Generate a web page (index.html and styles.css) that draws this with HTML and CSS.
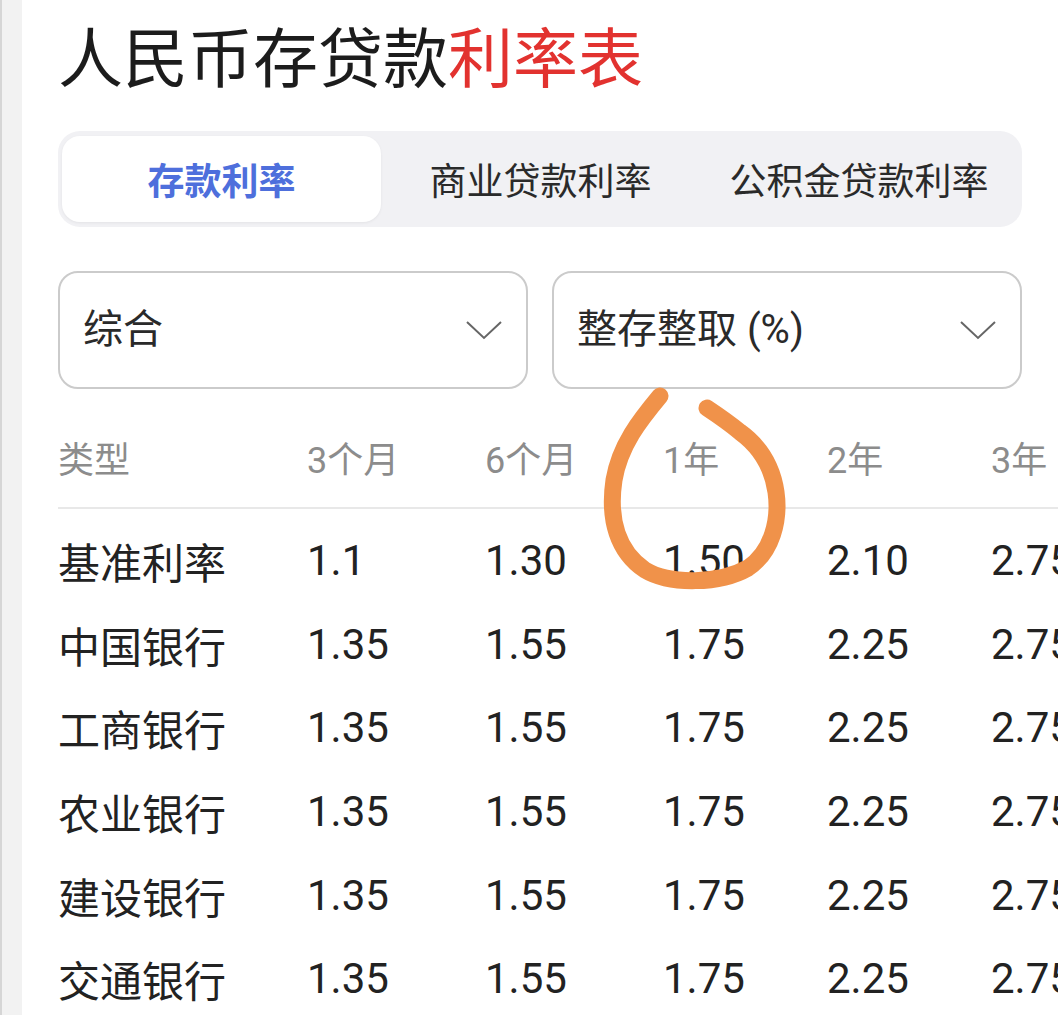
FILE: index.html
```html
<!DOCTYPE html>
<html lang="zh-CN">
<head>
<meta charset="utf-8">
<title>人民币存贷款利率表</title>
<link rel="stylesheet" href="styles.css">
</head>
<body>
<div class="shell">
  <div class="rail"></div>
  <main class="page">
    <h1 class="title">人民币存贷款<span class="accent">利率表</span></h1>

    <div class="tabs">
      <div class="tab active">存款利率</div>
      <div class="tab">商业贷款利率</div>
      <div class="tab">公积金贷款利率</div>
    </div>

    <div class="filters">
      <div class="select">
        <span class="select-label">综合</span>
        <svg class="chev" viewBox="0 0 36 20" width="36" height="20"><path d="M1 2 L18 18 L35 2" fill="none" stroke="#666" stroke-width="2"/></svg>
      </div>
      <div class="select">
        <span class="select-label">整存整取 (%)</span>
        <svg class="chev" viewBox="0 0 36 20" width="36" height="20"><path d="M1 2 L18 18 L35 2" fill="none" stroke="#666" stroke-width="2"/></svg>
      </div>
    </div>

    <div class="table">
      <div class="row head">
        <div>类型</div><div>3个月</div><div>6个月</div><div>1年</div><div>2年</div><div>3年</div>
      </div>
      <div class="row"><div class="name">基准利率</div><div>1.1</div><div>1.30</div><div>1.50</div><div>2.10</div><div>2.75</div></div>
      <div class="row"><div class="name">中国银行</div><div>1.35</div><div>1.55</div><div>1.75</div><div>2.25</div><div>2.75</div></div>
      <div class="row"><div class="name">工商银行</div><div>1.35</div><div>1.55</div><div>1.75</div><div>2.25</div><div>2.75</div></div>
      <div class="row"><div class="name">农业银行</div><div>1.35</div><div>1.55</div><div>1.75</div><div>2.25</div><div>2.75</div></div>
      <div class="row"><div class="name">建设银行</div><div>1.35</div><div>1.55</div><div>1.75</div><div>2.25</div><div>2.75</div></div>
      <div class="row"><div class="name">交通银行</div><div>1.35</div><div>1.55</div><div>1.75</div><div>2.25</div><div>2.75</div></div>
    </div>
  </main>
</div>

<svg class="scribble" viewBox="0 0 1058 1015" width="1058" height="1015">
  <path d="M660 396 C640 420 620 445 614 480 C608 520 618 552 645 570 C670 585 720 584 748 568 C772 552 780 520 776 492 C772 465 758 445 740 432 C728 422 716 414 707 408"
        fill="none" stroke="#f0924a" stroke-width="17" stroke-linecap="round" stroke-linejoin="round"/>
</svg>
</body>
</html>
```

FILE: styles.css
```css
* { box-sizing: border-box; }

html, body {
  margin: 0;
  padding: 0;
  background: #ffffff;
}

body {
  width: 1058px;
  height: 1015px;
  overflow: hidden;
  position: relative;
  font-family: Roboto, "Noto Sans CJK SC", sans-serif;
  color: #222;
}

.shell {
  display: flex;
  height: 1015px;
}

.rail {
  width: 22px;
  flex: none;
  background: #f2f2f2;
  border-left: 2px solid #d6d6d6;
}

.page {
  flex: 1;
  padding-left: 36px;
  overflow: hidden;
}

.title {
  margin: 0;
  padding-top: 18px;
  font-family: "Noto Sans CJK SC", sans-serif;
  font-weight: 400;
  font-size: 65px;
  line-height: 72px;
  color: #1c1c1c;
  letter-spacing: 0;
}

.accent {
  color: #e2322f;
}

.tabs {
  margin-top: 41px;
  width: 964px;
  height: 96px;
  padding: 5px 4px;
  background: #f1f1f4;
  border-radius: 22px;
  display: grid;
  grid-template-columns: 319px 319px 1fr;
}

.tab {
  display: flex;
  align-items: center;
  justify-content: center;
  font-family: "Noto Sans CJK SC", sans-serif;
  font-size: 37px;
  color: #2a2a2a;
  border-radius: 18px;
}

.tab.active {
  background: #ffffff;
  color: #4e6fdc;
  font-weight: 700;
  box-shadow: 0 1px 3px rgba(0, 0, 0, 0.06);
}

.filters {
  margin-top: 44px;
  width: 964px;
  display: grid;
  grid-template-columns: 470px 470px;
  column-gap: 24px;
}

.select {
  height: 118px;
  border: 2px solid #cbcbcb;
  border-radius: 20px;
  display: flex;
  align-items: center;
  justify-content: space-between;
  padding: 0 24px 0 23px;
}

.select-label {
  font-size: 40px;
  color: #2a2a2a;
  line-height: 1;
}

.chev {
  display: block;
}

.table {
  margin-top: 22px;
}

.row {
  display: grid;
  grid-template-columns: 249px 178px 178px 164px 164px 164px;
  height: 83.6px;
  align-items: center;
  font-size: 42px;
  color: #222;
  white-space: nowrap;
}

.row.head {
  height: 98px;
  font-size: 36px;
  color: #8c8c8c;
  border-bottom: 2px solid #e8e8e8;
  align-items: center;
  padding-bottom: 4px;
}

.row:nth-child(2) {
  margin-top: 10px;
}

.scribble {
  position: absolute;
  left: 0;
  top: 0;
  pointer-events: none;
}
```
